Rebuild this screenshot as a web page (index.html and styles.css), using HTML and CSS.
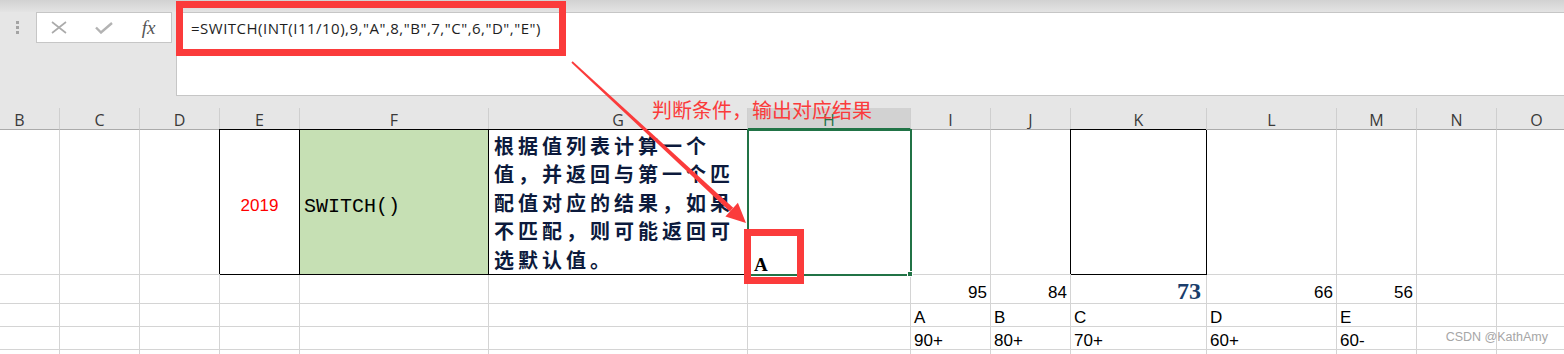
FILE: index.html
```html
<!DOCTYPE html>
<html lang="zh-CN">
<head>
<meta charset="UTF-8">
<title>SWITCH</title>
<link rel="stylesheet" href="styles.css">
</head>
<body>
    <div class="ribbon-edge"></div>

    <div class="formula-row">
        <div class="name-tools">
            <div class="grip"><span></span><span></span><span></span></div>
            <div class="tools">
                <span class="tool">
                    <svg width="16" height="13" viewBox="0 0 16 13"><path d="M1 1 L15 12 M15 1 L1 12" stroke="#ababab" stroke-width="1.6" fill="none"/></svg>
                </span>
                <span class="tool">
                    <svg width="18" height="12" viewBox="0 0 18 12"><path d="M1 5.5 L6 10.5 L17 1" stroke="#b3b3b3" stroke-width="2.4" fill="none"/></svg>
                </span>
                <span class="tool fx">fx</span>
            </div>
        </div>
        <div class="formula-input">=SWITCH(INT(I11/10),9,"A",8,"B",7,"C",6,"D","E")</div>
    </div>

    <div class="sheet">
        <div class="heads">
            <div class="h">B</div><div class="h">C</div><div class="h">D</div><div class="h">E</div>
            <div class="h">F</div><div class="h">G</div><div class="h active">H</div><div class="h">I</div>
            <div class="h">J</div><div class="h">K</div><div class="h">L</div><div class="h">M</div>
            <div class="h">N</div><div class="h">O</div>
        </div>

        <div class="grid">
            <!-- row 11 -->
            <div class="c"></div><div class="c"></div><div class="c"></div>
            <div class="c boxed year">2019</div>
            <div class="c boxed fill fn">SWITCH()</div>
            <div class="c boxed desc">根据值列表计算一个<br>值，并返回与第一个匹<br>配值对应的结果，如果<br>不匹配，则可能返回可<br>选默认值。</div>
            <div class="c sel">A</div>
            <div class="c"></div><div class="c"></div>
            <div class="c boxed"></div>
            <div class="c"></div><div class="c"></div><div class="c"></div><div class="c"></div>

            <!-- row 12 -->
            <div class="c"></div><div class="c"></div><div class="c"></div><div class="c"></div>
            <div class="c"></div><div class="c"></div><div class="c"></div>
            <div class="c num">95</div>
            <div class="c num">84</div>
            <div class="c num big">73</div>
            <div class="c num">66</div>
            <div class="c num">56</div>
            <div class="c"></div><div class="c"></div>

            <!-- row 13 -->
            <div class="c"></div><div class="c"></div><div class="c"></div><div class="c"></div>
            <div class="c"></div><div class="c"></div><div class="c"></div>
            <div class="c">A</div><div class="c">B</div><div class="c">C</div><div class="c">D</div><div class="c">E</div>
            <div class="c"></div><div class="c"></div>

            <!-- row 14 -->
            <div class="c"></div><div class="c"></div><div class="c"></div><div class="c"></div>
            <div class="c"></div><div class="c"></div><div class="c"></div>
            <div class="c">90+</div><div class="c">80+</div><div class="c">70+</div><div class="c">60+</div><div class="c">60-</div>
            <div class="c"></div><div class="c"></div>

            <!-- row 15 -->
            <div class="c"></div><div class="c"></div><div class="c"></div><div class="c"></div>
            <div class="c"></div><div class="c"></div><div class="c"></div><div class="c"></div>
            <div class="c"></div><div class="c"></div><div class="c"></div><div class="c"></div>
            <div class="c"></div><div class="c"></div>
        </div>
    </div>

    <!-- annotations drawn over the sheet -->
    <div class="mark formula-mark"></div>
    <div class="mark cell-mark"></div>
    <svg class="arrow" width="1564" height="354" viewBox="0 0 1564 354">
        <polygon points="571.4,62.7 572.6,61.3 733.2,207.8 729.8,211.4" fill="#fb3b3b"/>
        <polygon points="746,223 725.4,216.4 737.9,202.8" fill="#fb3b3b"/>
    </svg>
    <div class="note">判断条件，输出对应结果</div>
    <div class="watermark">CSDN @KathAmy</div>
</body>
</html>
```

FILE: styles.css
```css
html, body {
    margin: 0;
    padding: 0;
}

body {
    width: 1564px;
    height: 354px;
    overflow: hidden;
    position: relative;
    background: #e6e6e6;
    font-family: "Liberation Sans", Arial, sans-serif;
}

/* FORMULA BAR */
.ribbon-edge {
    height: 12px;
    background: linear-gradient(#d2d2d2, #e4e4e4);
}

.formula-row {
    display: flex;
    height: 84px;
}

.name-tools {
    width: 176px;
    flex-shrink: 0;
    display: flex;
    align-items: flex-start;
}

.grip {
    display: flex;
    flex-direction: column;
    gap: 2px;
    margin: 9px 0 0 16px;
}

.grip span {
    width: 3px;
    height: 3px;
    background: #a3a3a3;
}

.tools {
    display: flex;
    align-items: center;
    width: 136px;
    height: 31px;
    box-sizing: border-box;
    margin-left: 17px;
    background: #fff;
    border: 1px solid #c6c6c6;
}

.tool {
    width: 45px;
    display: flex;
    justify-content: center;
}

.fx {
    font-family: "Liberation Serif", serif;
    font-style: italic;
    font-size: 19px;
    color: #555;
}

.formula-input {
    flex: 1;
    background: #fff;
    border: 1px solid #c6c6c6;
    border-right: none;
    padding: 5px 0 0 14px;
    font-family: "Open Sans", sans-serif;
    font-size: 15px;
    letter-spacing: 0.5px;
    line-height: 20px;
    color: #1e1e1e;
}

/* SHEET */
.sheet {
    margin: 12px 0 0 -20px;
}

.heads, .grid {
    display: grid;
    grid-template-columns: 80px 80px 80px 80px 189px 259px 163px 80px 80px 136px 130px 80px 80px 80px;
}

.h {
    height: 22px;
    box-sizing: border-box;
    border-right: 1px solid #cfcfcf;
    border-bottom: 1px solid #ababab;
    text-align: center;
    font-family: "Open Sans", sans-serif;
    font-size: 16px;
    line-height: 25px;
    color: #3a3a3a;
    overflow: hidden;
}

.h.active {
    background: #d2d2d2;
    color: #217346;
    border-bottom: 2px solid #217346;
}

.grid {
    grid-template-rows: 145px 29px 23px 23px 23px;
    background: #fff;
}

.c {
    box-sizing: border-box;
    min-width: 0;
    border-right: 1px solid #d4d4d4;
    border-bottom: 1px solid #d4d4d4;
    display: flex;
    align-items: flex-end;
    padding: 0 3px;
    font-size: 17px;
    line-height: 17px;
    color: #000;
    white-space: nowrap;
}

.boxed {
    border-color: #000;
    box-shadow: -1px -1px 0 #000;
}

.fill {
    background: #c6e0b4;
}

.year {
    justify-content: center;
    align-items: center;
    padding-top: 6px;
    color: #f00;
}

.fn {
    align-items: center;
    padding: 10px 0 0 4px;
    font-family: "Liberation Mono", monospace;
    font-size: 20px;
    line-height: 20px;
}

.desc {
    padding: 0 0 0 5px;
    font-family: "Noto Sans CJK SC", sans-serif;
    font-weight: bold;
    font-size: 20px;
    line-height: 28.5px;
    letter-spacing: 4px;
    color: #0c1a3c;
    white-space: normal;
}

/* selected cell */
.sel {
    position: relative;
    outline: 2px solid #217346;
    outline-offset: -1px;
    padding-left: 6px;
    font-family: "Liberation Serif", serif;
    font-weight: bold;
    font-size: 19px;
    line-height: 18px;
}

.sel::after {
    content: "";
    position: absolute;
    right: -3px;
    bottom: -3px;
    width: 4px;
    height: 4px;
    background: #217346;
    border: 1px solid #fff;
}

.num {
    justify-content: flex-end;
    padding-bottom: 2px;
}

.big {
    padding: 0 5px 0 0;
    font-family: "Liberation Serif", serif;
    font-weight: bold;
    font-size: 24px;
    line-height: 24px;
    color: #1b3d6b;
}

/* ANNOTATIONS */
.mark {
    position: absolute;
    box-sizing: border-box;
    border: 7px solid #fb3b3b;
}

.formula-mark {
    left: 176px;
    top: 1px;
    width: 390px;
    height: 55px;
}

.cell-mark {
    left: 744px;
    top: 229px;
    width: 60px;
    height: 55px;
}

.arrow {
    position: absolute;
    left: 0;
    top: 0;
    pointer-events: none;
}

.note {
    position: absolute;
    left: 652px;
    top: 98px;
    font-family: "Noto Sans CJK SC", sans-serif;
    font-size: 20px;
    line-height: 24px;
    color: #fb3b3b;
}

.watermark {
    position: absolute;
    right: 16px;
    top: 330px;
    font-size: 12.5px;
    color: #a6a6a6;
}
```
